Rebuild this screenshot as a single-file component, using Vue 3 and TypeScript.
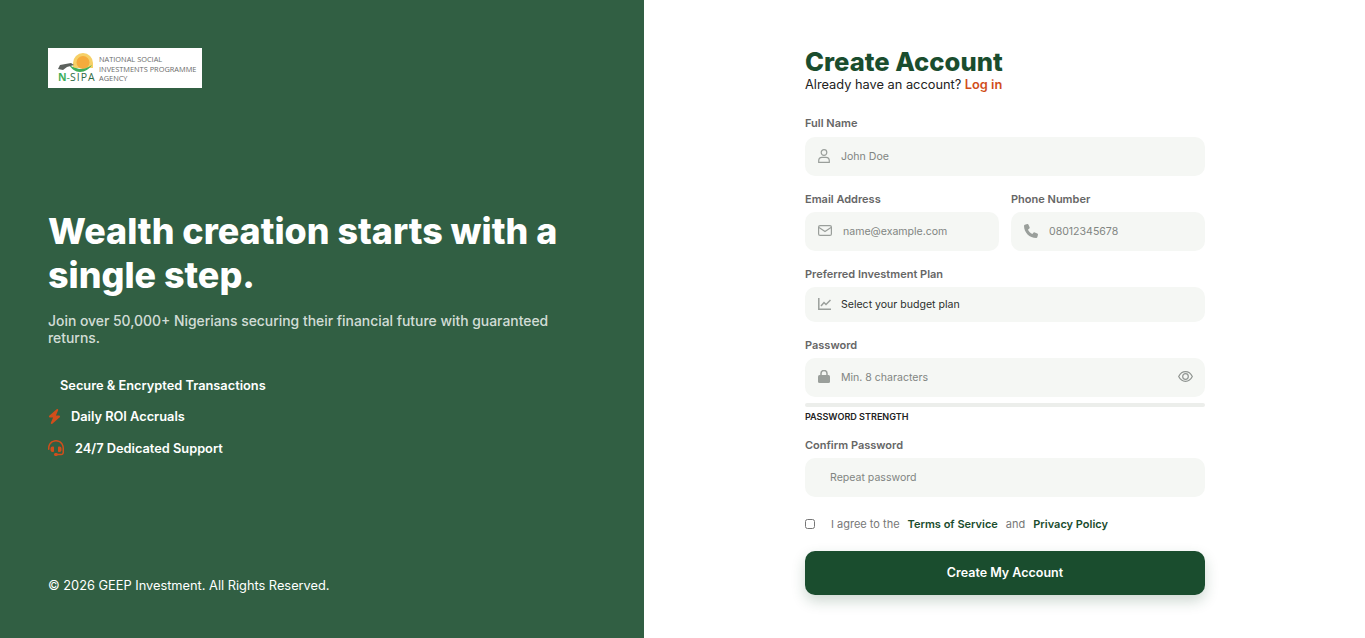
<script setup lang="ts">
const perks = [
  {
    text: 'Daily ROI Accruals',
    icon: 'bolt',
    box: '0 0 448 512',
    w: 13,
    h: 15,
    d: 'M349.400 44.600c5.900-13.700 1.500-29.700-10.600-38.500s-28.600-8-39.900 1.800l-256 224c-10 8.800-13.600 22.900-8.900 35.300S50.700 288 64 288H175.500L98.600 467.400c-5.900 13.700-1.500 29.700 10.600 38.500s28.600 8 39.900-1.800l256-224c10-8.800 13.600-22.900 8.900-35.300s-16.600-20.700-30-20.700H272.500L349.400 44.600z'
  },
  {
    text: '24/7 Dedicated Support',
    icon: 'headset',
    box: '0 0 512 512',
    w: 16,
    h: 16,
    d: 'M256 48C141.100 48 48 141.100 48 256v40c0 13.300-10.700 24-24 24s-24-10.700-24-24V256C0 114.600 114.600 0 256 0S512 114.600 512 256V400.100c0 48.600-39.400 88-88.100 88L313.600 488c-8.300 14.300-23.800 24-41.600 24H240c-26.500 0-48-21.500-48-48s21.500-48 48-48h32c17.800 0 33.300 9.700 41.600 24l110.400 .1c22.100 0 40-17.900 40-40V256c0-114.900-93.100-208-208-208zM144 208h16c17.700 0 32 14.300 32 32V352c0 17.700-14.300 32-32 32H144c-35.300 0-64-28.700-64-64V272c0-35.300 28.700-64 64-64zm224 0c35.300 0 64 28.700 64 64v48c0 35.300-28.700 64-64 64H352c-17.700 0-32-14.300-32-32V240c0-17.700 14.300-32 32-32h16z'
  }
]
</script>

<template>
  <div class="page">
    <aside class="side">
      <div class="logo">
        <svg class="logo-mark" width="50" height="26" viewBox="0 0 50 26" aria-hidden="true">
          <path d="M25 20V15a10 10 0 0 1 20 0v5z" fill="#f6d067" />
          <circle cx="35" cy="14.500" r="6.500" fill="#f5ab3c" />
          <path d="M23 21h22v4H23z" fill="#fff" />
          <path d="M21 17c3 1 5 3 7 3 5 2 10 1 16-3-3 4-7 7-12 7-5 0-8-3-11-7z" fill="#3fae5a" />
          <path d="M10 21l2-4 11-2 3 2-7 2-4 3z" fill="#5c615d" />
        </svg>
        <span class="logo-brand"><b>N</b><i>-</i>SIPA</span>
        <span class="logo-name">NATIONAL SOCIAL<br />INVESTMENTS PROGRAMME<br />AGENCY</span>
      </div>

      <div class="pitch">
        <h1>Wealth creation starts with a single step.</h1>
        <p class="lead">Join over 50,000+ Nigerians securing their financial future with guaranteed returns.</p>
        <ul>
          <li class="plain">Secure &amp; Encrypted Transactions</li>
          <li v-for="p in perks" :key="p.text" :class="p.icon">
            <svg :width="p.w" :height="p.h" :viewBox="p.box" aria-hidden="true">
              <path :d="p.d" fill="#d14e1b" />
            </svg>
            <span>{{ p.text }}</span>
          </li>
        </ul>
      </div>

      <div class="copy">© 2026 GEEP Investment. All Rights Reserved.</div>
    </aside>

    <main class="main">
      <form class="form" @submit.prevent>
        <h2>Create Account</h2>
        <p class="sub">Already have an account? <a href="#">Log in</a></p>

        <label class="lbl first">Full Name</label>
        <div class="field">
          <svg class="ico lift" width="12" height="14" viewBox="0 0 12 14" fill="none" stroke="#9a9f9b" stroke-width="1.200" aria-hidden="true">
            <circle cx="6" cy="3.500" r="2.800" />
            <path d="M.700 13.300v-1.500c0-2 1.500-3.500 3.300-3.500h4c1.800 0 3.300 1.500 3.300 3.500v1.500z" />
          </svg>
          <input class="inp" placeholder="John Doe" />
        </div>

        <div class="two">
          <div>
            <label class="lbl">Email Address</label>
            <div class="field">
              <svg class="ico lift" width="14" height="11" viewBox="0 0 14 11" fill="none" stroke="#9a9f9b" stroke-width="1.200" aria-hidden="true">
                <rect x="0.600" y="0.600" width="12.800" height="9.800" rx="1.500" />
                <path d="M1 2.500l6 4 6-4" />
              </svg>
              <input class="inp" placeholder="name@example.com" />
            </div>
          </div>
          <div>
            <label class="lbl">Phone Number</label>
            <div class="field">
              <svg class="ico lift" width="14" height="14" viewBox="0 0 512 512" aria-hidden="true">
                <path d="M164.900 24.600c-7.700-18.600-28-28.500-47.400-23.200l-88 24C12.100 30.200 0 46 0 64C0 311.400 200.600 512 448 512c18 0 33.800-12.100 38.600-29.500l24-88c5.300-19.400-4.600-39.700-23.200-47.400l-96-40c-16.300-6.800-35.200-2.100-46.300 11.600L304.700 368C234.300 334.700 177.300 277.700 144 207.300L193.300 167c13.700-11.200 18.400-30 11.600-46.300l-40-96z" fill="#9a9f9b" />
              </svg>
              <input class="inp" placeholder="08012345678" />
            </div>
          </div>
        </div>

        <label class="lbl">Preferred Investment Plan</label>
        <div class="field plan">
          <svg class="ico lift" width="13" height="12" viewBox="0 0 13 12" fill="none" stroke="#9a9f9b" stroke-width="1.500" aria-hidden="true">
            <path d="M.800 0v11.200H13" />
            <path d="M3 8l3-3.500 2 2 4.500-4.500" />
          </svg>
          <span class="plan-text">Select your budget plan</span>
        </div>

        <label class="lbl">Password</label>
        <div class="field">
          <svg class="ico lift" width="12" height="13" viewBox="0 0 12 13" aria-hidden="true">
            <path d="M3 6V3.500a3 3 0 0 1 6 0V6" fill="none" stroke="#9a9f9b" stroke-width="1.500" />
            <rect x="0" y="5" width="12" height="8" rx="1.500" fill="#9a9f9b" />
          </svg>
          <input class="inp" placeholder="Min. 8 characters" />
          <svg class="eye lift" width="15" height="11" viewBox="0 0 15 11" fill="none" stroke="#8f9491" stroke-width="1.200" aria-hidden="true">
            <path d="M.700 5.500C2.300 2.300 4.700.700 7.500.700s5.200 1.600 6.800 4.800c-1.600 3.200-4 4.800-6.800 4.800S2.300 8.700.700 5.500z" />
            <circle cx="7.500" cy="5.500" r="2.800" />
          </svg>
        </div>
        <div class="meter"></div>
        <div class="strength">PASSWORD STRENGTH</div>

        <label class="lbl confirm">Confirm Password</label>
        <div class="field">
          <input class="inp bare" placeholder="Repeat password" />
        </div>

        <div class="agree">
          <input type="checkbox" class="check" />
          <span class="agree-text">I agree to the</span>
          <a href="#">Terms of Service</a>
          <span class="agree-text">and</span>
          <a href="#">Privacy Policy</a>
        </div>

        <button class="submit" type="submit">Create My Account</button>
      </form>
    </main>
  </div>
</template>

<style>
html, body { margin: 0; background: #fff; }
</style>

<style scoped>
* { box-sizing: border-box; }

.page {
  display: flex;
  height: 638px;
  overflow: hidden;
  font-family: Inter, "Liberation Sans", sans-serif;
}

.side {
  width: 644px;
  flex: none;
  background: #315f43;
  color: #fff;
  padding: 48px 48px 44px;
  display: flex;
  flex-direction: column;
  justify-content: space-between;
}

.logo {
  position: relative;
  width: 154px;
  height: 40px;
  background: #fff;
}
.logo-mark { position: absolute; left: 0; top: 0; }
.logo-brand {
  position: absolute;
  left: 10px;
  top: 23px;
  font-size: 10.500px;
  line-height: 12px;
  letter-spacing: 1px;
  color: #2f6b45;
  font-family: "Open Sans", sans-serif;
  font-weight: 400;
  white-space: nowrap;
}
.logo-brand b { color: #3fae5a; font-weight: 700; letter-spacing: 0; }
.logo-brand i { color: #3fae5a; font-style: normal; letter-spacing: 0; }
.logo-name {
  position: absolute;
  left: 51px;
  top: 7px;
  font-size: 7.400px;
  line-height: 9.500px;
  color: #6b6b6b;
  font-family: "Open Sans", sans-serif;
  font-weight: 500;
  white-space: nowrap;
}

.pitch { width: 548px; margin-top: 15px; }

h1 {
  margin: 0;
  font-size: 35.860px;
  line-height: 44px;
  font-weight: 800;
  width: 530px;
}
.lead {
  margin: 16px 0 0;
  font-size: 13.900px;
  line-height: 17px;
  font-weight: 500;
  color: rgba(255, 255, 255, 0.8);
  width: 510px;
}
ul {
  list-style: none;
  margin: 30px 0 0;
  padding: 0;
  font-size: 12.800px;
  font-weight: 600;
}
li {
  display: flex;
  align-items: center;
  height: 17px;
  margin-bottom: 14.500px;
}
li.plain { padding-left: 12px; }
li.bolt { gap: 10px; }
li.headset { gap: 11px; }

.copy { font-size: 12.800px; line-height: 17px; color: #fff; }

.main {
  flex: 1;
  display: flex;
}
.form { width: 400px; padding-top: 47px; margin-left: 161px; }

h2 {
  margin: 0;
  font-size: 25.600px;
  line-height: 30px;
  font-weight: 800;
  color: #1a4d2e;
}
.sub {
  margin: 0;
  font-size: 12.800px;
  line-height: 16px;
  color: #222;
}
.sub a { color: #d14e1b; font-weight: 600; text-decoration: none; }

.lbl {
  display: block;
  font-size: 11px;
  line-height: 14px;
  font-weight: 600;
  color: #666;
  margin: 16px 0 6px;
}
.lbl.first { margin: 23px 0 7px; }
.lbl.confirm { margin-top: 15px; }

.field {
  display: flex;
  align-items: center;
  height: 39px;
  padding: 0 12px 0 13px;
  background: #f5f7f4;
  border-radius: 10px;
}
.ico { flex: none; }
.lift { margin-bottom: 2px; }
.inp {
  flex: 1;
  min-width: 0;
  border: 0;
  outline: 0;
  background: transparent;
  font: 400 10.560px Inter, sans-serif;
  color: #222;
  margin-left: 11px;
  padding: 0;
}
.inp.bare { margin-left: 12px; }
.inp::placeholder { color: #818582; opacity: 1; }

.two {
  display: grid;
  grid-template-columns: 194px 194px;
  gap: 12px;
}

.field.plan { height: 35px; }
.plan-text { font-size: 10.560px; color: #2c2f2d; margin-left: 10px; }

.eye { flex: none; }

.meter {
  height: 4px;
  margin-top: 6px;
  background: #eceeeb;
  border-radius: 2px;
}
.strength {
  margin-top: 4px;
  font-size: 9.050px;
  line-height: 12px;
  font-weight: 600;
  color: #222;
}

.agree {
  display: flex;
  align-items: center;
  height: 14px;
  margin-top: 20px;
  font-size: 11px;
}
.check { width: 10px; height: 10px; margin: 0 16px 0 0; flex: none; }
.agree-text { color: #777; }
.agree a {
  color: #1a4d2e;
  font-weight: 600;
  text-decoration: none;
  margin: 0 8px;
}

.submit {
  display: block;
  width: 100%;
  height: 44px;
  margin-top: 20px;
  padding: 0 0 2px;
  border: 0;
  border-radius: 10px;
  background: #1a4d2e;
  color: #fff;
  font: 600 12.500px Inter, sans-serif;
  box-shadow: 0 6px 14px rgba(26, 77, 46, 0.22);
}
</style>
